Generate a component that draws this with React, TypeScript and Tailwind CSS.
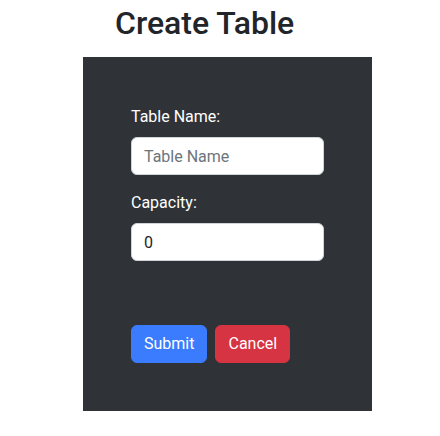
import { useState } from "react";

function App() {
    const [tableName, setTableName] = useState<string>("");
    const [capacity, setCapacity] = useState<string>("0");

    return (
        <div className="min-h-screen bg-white font-['Roboto',sans-serif] text-[#212529]">
            <div className="pl-[115px] pt-1">
                <h2 className="text-[32px] font-medium leading-[1.2]">Create Table</h2>
            </div>
            <form
                className="ml-[83px] mt-[15px] flex w-[289px] flex-col bg-[#2f3337] px-12 pb-12 pt-12"
                onSubmit={(e) => e.preventDefault()}
            >
                <div className="mb-4 flex flex-col">
                    <label className="mb-2 text-base leading-6 text-white">Table Name:</label>
                    <input
                        className="h-[38px] rounded-md border border-[#ced4da] bg-white px-3 text-base text-[#212529] placeholder:text-[#6c757d] focus:outline-none"
                        placeholder="Table Name"
                        value={tableName}
                        onChange={(e) => setTableName(e.target.value)}
                    />
                </div>
                <div className="flex flex-col">
                    <label className="mb-2 text-base leading-6 text-white">Capacity:</label>
                    <input
                        className="h-[38px] rounded-md border border-[#ced4da] bg-white px-3 text-base text-[#212529] focus:outline-none"
                        value={capacity}
                        onChange={(e) => setCapacity(e.target.value)}
                    />
                </div>
                <div className="mt-16 flex gap-2">
                    <button
                        type="submit"
                        className="h-[38px] rounded-md border border-[#3b7bfd] bg-[#3b7bfd] px-3 text-base text-white"
                    >
                        Submit
                    </button>
                    <button
                        type="button"
                        className="h-[38px] rounded-md border border-[#d63343] bg-[#d63343] px-3 text-base text-white"
                    >
                        Cancel
                    </button>
                </div>
            </form>
        </div>
    );
}

export default App;
